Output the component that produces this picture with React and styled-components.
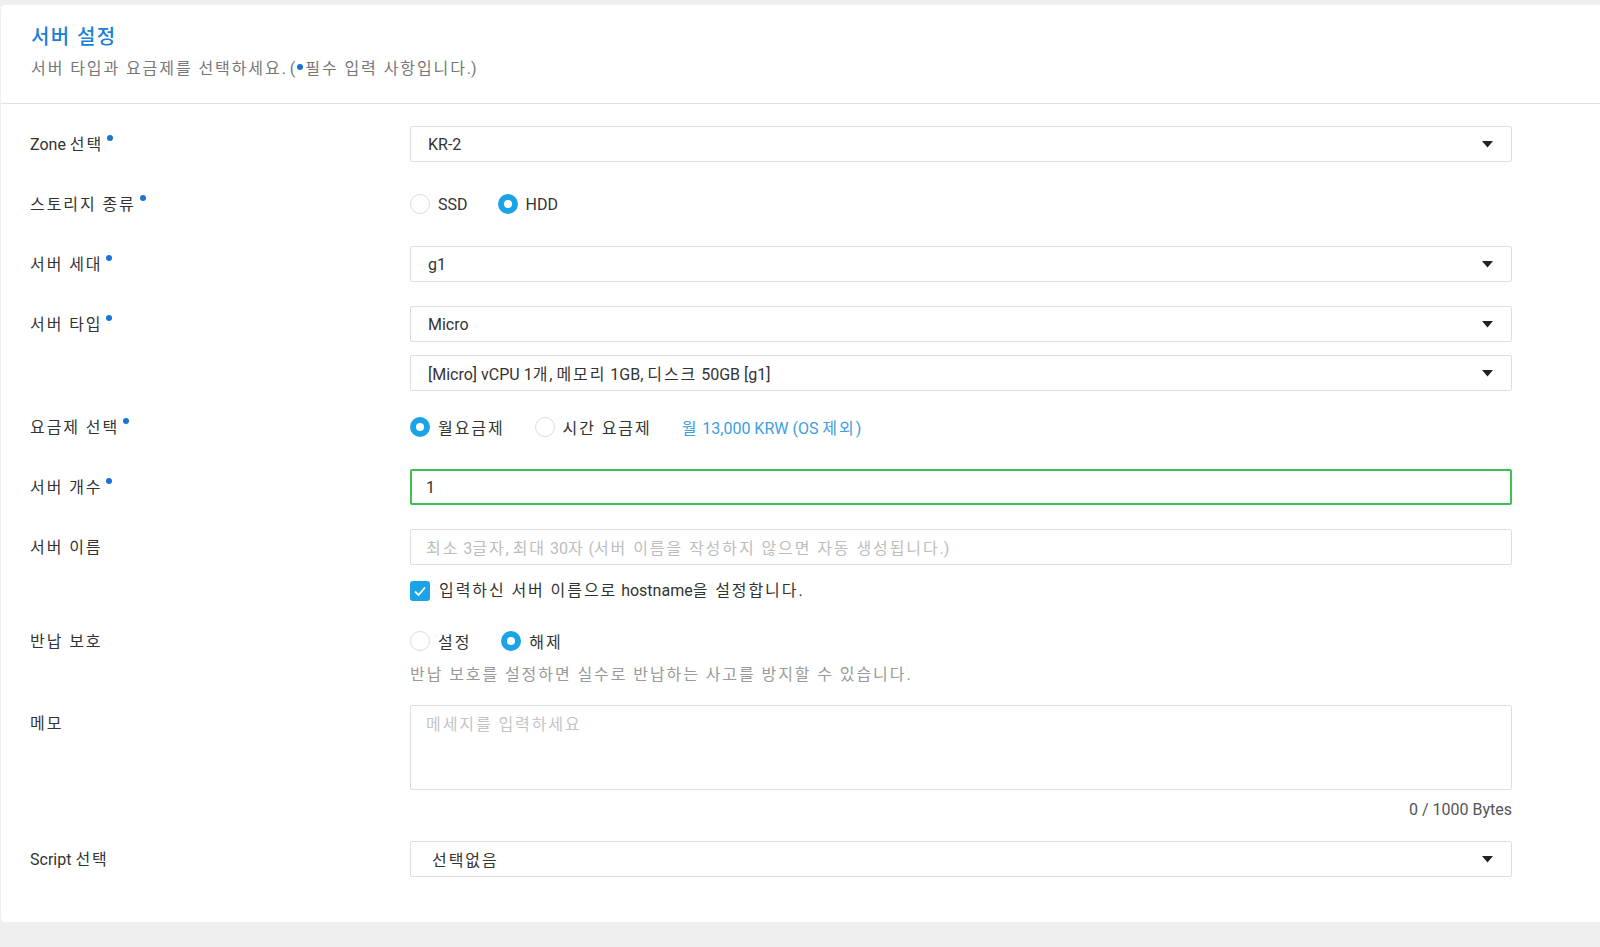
import styled, { createGlobalStyle } from "styled-components";

const GlobalStyle = createGlobalStyle`
  html, body {
    margin: 0;
    padding: 0;
    background: #efefef;
  }
  body {
    font-family: Roboto, "Noto Sans CJK KR", sans-serif;
    color: #333;
  }
`;

// the korean glyphs in the original run a little wider than Noto's,
// so hangul runs get some extra tracking
const HANGUL = /([\uAC00-\uD7A3\u3131-\u318E]+(?:\s+[\uAC00-\uD7A3\u3131-\u318E]+)*)/g;

function T({ children }) {
  if (typeof children !== "string") return children;
  return children
    .split(HANGUL)
    .map((part, i) => (i % 2 === 1 ? <Hangul key={i}>{part}</Hangul> : part));
}

export default function App() {
  return (
    <>
      <GlobalStyle />
      <Page>
        <Card>
          <Header>
            <Title>
              <T>서버 설정</T>
            </Title>
            <Subtitle>
              <T>서버 타입과 요금제를 선택하세요. (</T>
              <Dot $inline />
              <T>필수 입력 사항입니다.)</T>
            </Subtitle>
          </Header>
          <Body>
            <Row>
              <Label required>Zone 선택</Label>
              <Field>
                <Select value="KR-2" />
              </Field>
            </Row>
            <Row>
              <Label required>스토리지 종류</Label>
              <Field>
                <RadioGroup>
                  <Radio label="SSD" />
                  <Radio label="HDD" checked />
                </RadioGroup>
              </Field>
            </Row>
            <Row>
              <Label required>서버 세대</Label>
              <Field>
                <Select value="g1" />
              </Field>
            </Row>
            <Row>
              <Label required>서버 타입</Label>
              <Field $gap={13}>
                <Select value="Micro" />
                <Select value="[Micro] vCPU 1개, 메모리 1GB, 디스크 50GB [g1]" />
              </Field>
            </Row>
            <Row $mt={18}>
              <Label required>요금제 선택</Label>
              <Field>
                <RadioGroup>
                  <Radio label="월요금제" checked />
                  <Radio label="시간 요금제" />
                  <Price>
                    <T>월 13,000 KRW (OS 제외)</T>
                  </Price>
                </RadioGroup>
              </Field>
            </Row>
            <Row>
              <Label required>서버 개수</Label>
              <Field>
                <Input $focus>
                  <span>1</span>
                </Input>
              </Field>
            </Row>
            <Row>
              <Label>서버 이름</Label>
              <Field $gap={15}>
                <Input $placeholder>
                  <span>
                    <T>최소 3글자, 최대 30자 (서버 이름을 작성하지 않으면 자동 생성됩니다.)</T>
                  </span>
                </Input>
                <CheckLine>
                  <CheckBox>
                    <svg width="14" height="14" viewBox="0 0 14 14">
                      <polyline
                        points="2,7.5 5.5,11 12,3.5"
                        fill="none"
                        stroke="#fff"
                        strokeWidth="1.8"
                      />
                    </svg>
                  </CheckBox>
                  <span>
                    <T>입력하신 서버 이름으로 hostname을 설정합니다.</T>
                  </span>
                </CheckLine>
              </Field>
            </Row>
            <Row $mt={21}>
              <Label>반납 보호</Label>
              <Field $gap={0}>
                <RadioGroup>
                  <Radio label="설정" />
                  <Radio label="해제" checked />
                </RadioGroup>
                <Help>
                  <T>반납 보호를 설정하면 실수로 반납하는 사고를 방지할 수 있습니다.</T>
                </Help>
              </Field>
            </Row>
            <Row $mt={18}>
              <Label>메모</Label>
              <Field $gap={8}>
                <TextArea>
                  <T>메세지를 입력하세요</T>
                </TextArea>
                <Counter>0 / 1000 Bytes</Counter>
              </Field>
            </Row>
            <Row $mt={19}>
              <Label>Script 선택</Label>
              <Field>
                <Select value="선택없음" $pad={21} />
              </Field>
            </Row>
          </Body>
        </Card>
      </Page>
    </>
  );
}

function Label({ children, required }) {
  return (
    <LabelText>
      <T>{children}</T>
      {required && <Dot />}
    </LabelText>
  );
}

function Select({ value, $pad }) {
  return (
    <SelectBox $pad={$pad}>
      <span>
        <T>{value}</T>
      </span>
      <svg width="11" height="7" viewBox="0 0 11 7">
        <polygon points="0,0 11,0 5.5,6.5" fill="#222" />
      </svg>
    </SelectBox>
  );
}

function Radio({ label, checked }) {
  return (
    <RadioItem>
      <RadioCircle $checked={checked} />
      <span>
        <T>{label}</T>
      </span>
    </RadioItem>
  );
}

const Hangul = styled.span`
  letter-spacing: 0.12em;
`;

const Page = styled.div`
  padding-top: 5px;
  height: 947px;
  box-sizing: border-box;
  overflow: hidden;
`;

const Card = styled.div`
  background: #fff;
  margin-left: 1px;
  border-radius: 4px 0 0 4px;
  height: 917px;
  box-sizing: border-box;
`;

const Header = styled.div`
  padding: 18px 30px 22px;
  border-bottom: 1px solid #e2e2e2;
`;

const Title = styled.h1`
  margin: 0;
  font-size: 20px;
  line-height: 28px;
  font-weight: 500;
  color: #1a7fd6;
  ${Hangul} {
    letter-spacing: 0.07em;
  }
`;

const Subtitle = styled.p`
  margin: 6px 0 0;
  font-size: 16px;
  line-height: 24px;
  color: #777;
`;

const Dot = styled.span`
  display: inline-block;
  width: 6px;
  height: 6px;
  border-radius: 50%;
  background: #1a73d6;
  margin-left: ${(p) => (p.$inline ? "2px" : "4px")};
  margin-right: ${(p) => (p.$inline ? "2px" : "0")};
  vertical-align: ${(p) => (p.$inline ? "4px" : "9px")};
`;

const Body = styled.div`
  padding: 22px 88px 0 29px;
  display: flex;
  flex-direction: column;
`;

const Row = styled.div`
  display: grid;
  grid-template-columns: 380px 1fr;
  align-items: start;
  margin-top: ${(p) => (p.$mt ?? 24)}px;
  &:first-child {
    margin-top: 0;
  }
`;

const LabelText = styled.div`
  padding-top: 2px;
  font-size: 16px;
  line-height: 34px;
  color: #333;
  white-space: nowrap;
`;

const Field = styled.div`
  display: flex;
  flex-direction: column;
  gap: ${(p) => p.$gap ?? 12}px;
`;

const SelectBox = styled.div`
  height: 36px;
  box-sizing: border-box;
  border: 1px solid #dedede;
  border-radius: 2px;
  display: flex;
  align-items: center;
  justify-content: space-between;
  padding: 0 18px 0 ${(p) => p.$pad ?? 17}px;
  font-size: 16px;
  color: #333;
  svg {
    flex: none;
  }
`;

const Input = styled.div`
  height: 36px;
  box-sizing: border-box;
  border: ${(p) => (p.$focus ? "2px solid #3cc150" : "1px solid #dedede")};
  border-radius: 2px;
  display: flex;
  align-items: center;
  padding: 0 ${(p) => (p.$focus ? "14px" : "15px")};
  font-size: 16px;
  color: ${(p) => (p.$placeholder ? "#bdbdbd" : "#333")};
`;

const TextArea = styled.div`
  height: 85px;
  box-sizing: border-box;
  border: 1px solid #dedede;
  border-radius: 2px;
  padding: 8px 15px;
  font-size: 16px;
  line-height: 22px;
  color: #c4c4c4;
`;

const Counter = styled.div`
  text-align: right;
  font-size: 16px;
  line-height: 24px;
  color: #555;
`;

const RadioGroup = styled.div`
  height: 36px;
  display: flex;
  align-items: center;
  gap: 30px;
`;

const RadioItem = styled.label`
  display: flex;
  align-items: center;
  gap: 8px;
  font-size: 16px;
  color: #333;
`;

const RadioCircle = styled.span`
  width: 20px;
  height: 20px;
  box-sizing: border-box;
  border-radius: 50%;
  background: #fff;
  border: ${(p) => (p.$checked ? "6px solid #1aa3e6" : "1px solid #dcdcdc")};
`;

const Price = styled.span`
  font-size: 16px;
  color: #3aa0e3;
`;

const CheckLine = styled.label`
  display: flex;
  align-items: center;
  gap: 9px;
  font-size: 16px;
  line-height: 22px;
  color: #333;
`;

const CheckBox = styled.span`
  width: 20px;
  height: 20px;
  border-radius: 3px;
  background: #1aa3e6;
  display: flex;
  align-items: center;
  justify-content: center;
`;

const Help = styled.div`
  margin-top: 4px;
  font-size: 16px;
  line-height: 24px;
  color: #999;
`;
